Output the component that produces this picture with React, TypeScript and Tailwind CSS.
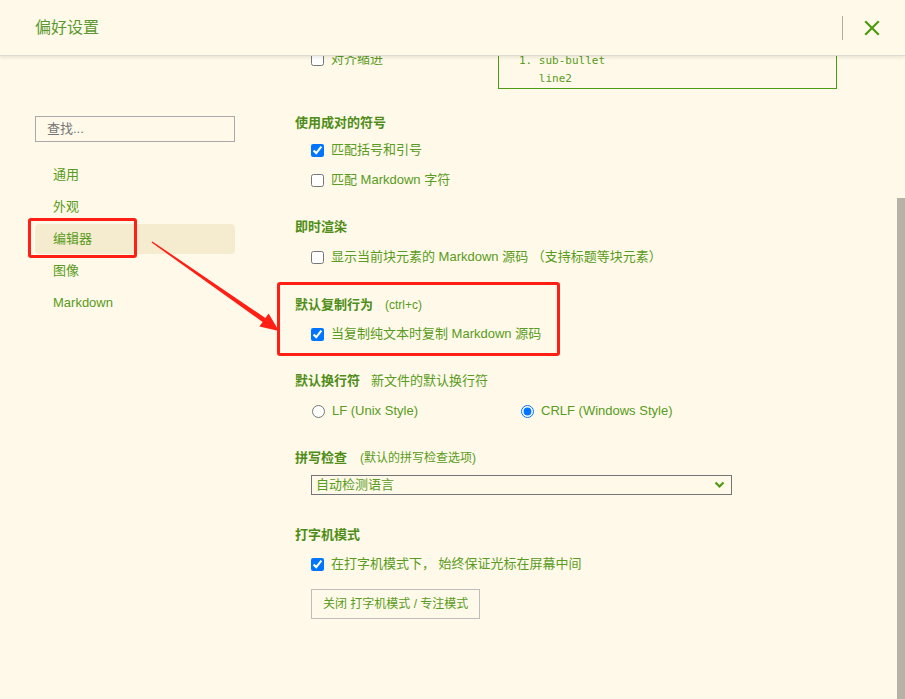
import React from "react";

const FONT = { fontFamily: '"Liberation Sans", "Noto Sans CJK SC", sans-serif' };

function Check({ checked, label }: { checked?: boolean; label: React.ReactNode }) {
  return (
    <label className="flex items-center h-5 pl-4 text-[13px] text-[#5a9b22]">
      <input type="checkbox" defaultChecked={checked} className="m-0 w-[13px] h-[13px] shrink-0" />
      <span className="ml-[7px] whitespace-nowrap">{label}</span>
    </label>
  );
}

function Heading({ children, sub }: { children: React.ReactNode; sub?: React.ReactNode }) {
  return (
    <div className="flex items-center h-5 whitespace-nowrap">
      <span className="text-[13px] font-bold text-[#4f8d18]">{children}</span>
      {sub}
    </div>
  );
}

export default function App() {
  return (
    <div className="relative w-[905px] h-[699px] overflow-hidden bg-[#fef9e8] flex flex-col" style={FONT}>
      {/* header */}
      <div className="relative z-10 h-14 shrink-0 flex items-center bg-[#fef9e8] border-b border-[#dedbd0] shadow-[0_2px_3px_rgba(0,0,0,0.08)]">
        <div className="pl-[35px] text-[16px] text-[#5c9830]">偏好设置</div>
        <div className="ml-auto w-px h-6 bg-[#b0aca0] mr-[21px]" />
        <div className="mr-[25px] flex items-center">
          <svg width="16" height="16" viewBox="0 0 16 16">
            <path d="M2 2 L14 14 M14 2 L2 14" stroke="#4e9a12" strokeWidth="2.2" strokeLinecap="square" />
          </svg>
        </div>
      </div>

      {/* body */}
      <div className="relative flex flex-1 min-h-0">
        {/* sidebar */}
        <div className="w-[295px] shrink-0 pl-[35px] pt-[60px]">
          <div className="w-[200px] h-[26px] border border-[#a9a9a9] flex items-center pl-[11px] text-[13px] text-[#757575]">查找...</div>
          <div className="mt-[18px] w-[200px] flex flex-col gap-[2px] text-[13px] text-[#5a9b22]">
            <div className="h-[30px] flex items-center pl-[18px]">通用</div>
            <div className="h-[30px] flex items-center pl-[18px]">外观</div>
            <div className="h-[30px] flex items-center pl-[18px] bg-[#f5eccf] rounded-[4px]">编辑器</div>
            <div className="h-[30px] flex items-center pl-[18px]">图像</div>
            <div className="h-[30px] flex items-center pl-[18px]">Markdown</div>
          </div>
        </div>

        {/* main */}
        <div className="flex-1 -mt-[16px] flex flex-col">
          <div className="flex items-start">
            <div className="w-[203px] shrink-0 mt-[9px]">
              <Check label="对齐缩进" />
            </div>
            <div
              className="w-[339px] border border-[#4e9a10] pt-[11px] pb-0 pl-[20px] text-[11px] leading-[18px] text-[#5a9b22] whitespace-pre"
              style={{ fontFamily: '"DejaVu Sans Mono", monospace' }}
            >
              <div>{"1. sub-bullet"}</div>
              <div>{"   line2"}</div>
            </div>
          </div>

          <div className="mt-[24px]">
            <Heading>使用成对的符号</Heading>
          </div>
          <div className="mt-[7px] flex flex-col gap-[10px]">
            <Check checked label="匹配括号和引号" />
            <Check label="匹配 Markdown 字符" />
          </div>

          <div className="mt-[27px]">
            <Heading>即时渲染</Heading>
          </div>
          <div className="mt-[10px]">
            <Check label="显示当前块元素的 Markdown 源码 （支持标题等块元素）" />
          </div>

          <div className="mt-[28px]">
            <Heading sub={<span className="ml-[12px] text-[12px] text-[#5a9b22]">(ctrl+c)</span>}>默认复制行为</Heading>
          </div>
          <div className="mt-[9px]">
            <Check checked label="当复制纯文本时复制 Markdown 源码" />
          </div>

          <div className="mt-[27px]">
            <Heading sub={<span className="ml-[11px] text-[13px] text-[#5a9b22]">新文件的默认换行符</span>}>默认换行符</Heading>
          </div>
          <div className="mt-[10px] flex items-center h-5 pl-[17px] text-[13px] text-[#5a9b22]">
            <label className="w-[209px] flex items-center">
              <input type="radio" name="eol" className="m-0 w-[13px] h-[13px]" />
              <span className="ml-[7px]">LF (Unix Style)</span>
            </label>
            <label className="flex items-center">
              <input type="radio" name="eol" defaultChecked className="m-0 w-[13px] h-[13px]" />
              <span className="ml-[7px]">CRLF (Windows Style)</span>
            </label>
          </div>

          <div className="mt-[27px]">
            <Heading sub={<span className="ml-[13px] text-[12px] text-[#5a9b22]">(默认的拼写检查选项)</span>}>拼写检查</Heading>
          </div>
          <div className="mt-[7px] ml-[16px] w-[421px] h-[20px] border border-[#767676] flex items-center pl-[4px] pr-[6px] text-[13px] text-[#5a9b22]">
            <span>自动检测语言</span>
            <svg className="ml-auto" width="11" height="8" viewBox="0 0 11 8">
              <path d="M1.5 1.5 L5.5 5.5 L9.5 1.5" stroke="#4e9a12" strokeWidth="2.2" fill="none" />
            </svg>
          </div>

          <div className="mt-[30px]">
            <Heading>打字机模式</Heading>
          </div>
          <div className="mt-[9px]">
            <Check checked label="在打字机模式下， 始终保证光标在屏幕中间" />
          </div>
          <div className="mt-[15px] ml-[16px]">
            <div className="inline-flex items-center h-[30px] px-[11px] border border-[#bdbdbd] text-[12px] text-[#5a9b22] whitespace-nowrap">
              关闭 打字机模式 / 专注模式
            </div>
          </div>
        </div>

        {/* scrollbar thumb */}
        <div className="absolute right-0 top-[142px] bottom-0 w-[8px] bg-[#b6b2a5]" />
      </div>

      {/* annotations */}
      <div className="absolute left-[28px] top-[218px] w-[109px] h-[40px] border-[3px] border-[#ff1f14] rounded-[3px]" />
      <div className="absolute left-[277px] top-[282px] w-[283px] h-[74px] border-[3px] border-[#ff1f14] rounded-[3px]" />
      <svg className="absolute left-0 top-0 pointer-events-none" width="905" height="699">
        <polygon
          points="152.4,241.4 265.4,318 268.6,313.4 279,331 259.4,326.6 262.6,322 151.6,242.6"
          fill="#ff1f14"
        />
      </svg>
    </div>
  );
}
